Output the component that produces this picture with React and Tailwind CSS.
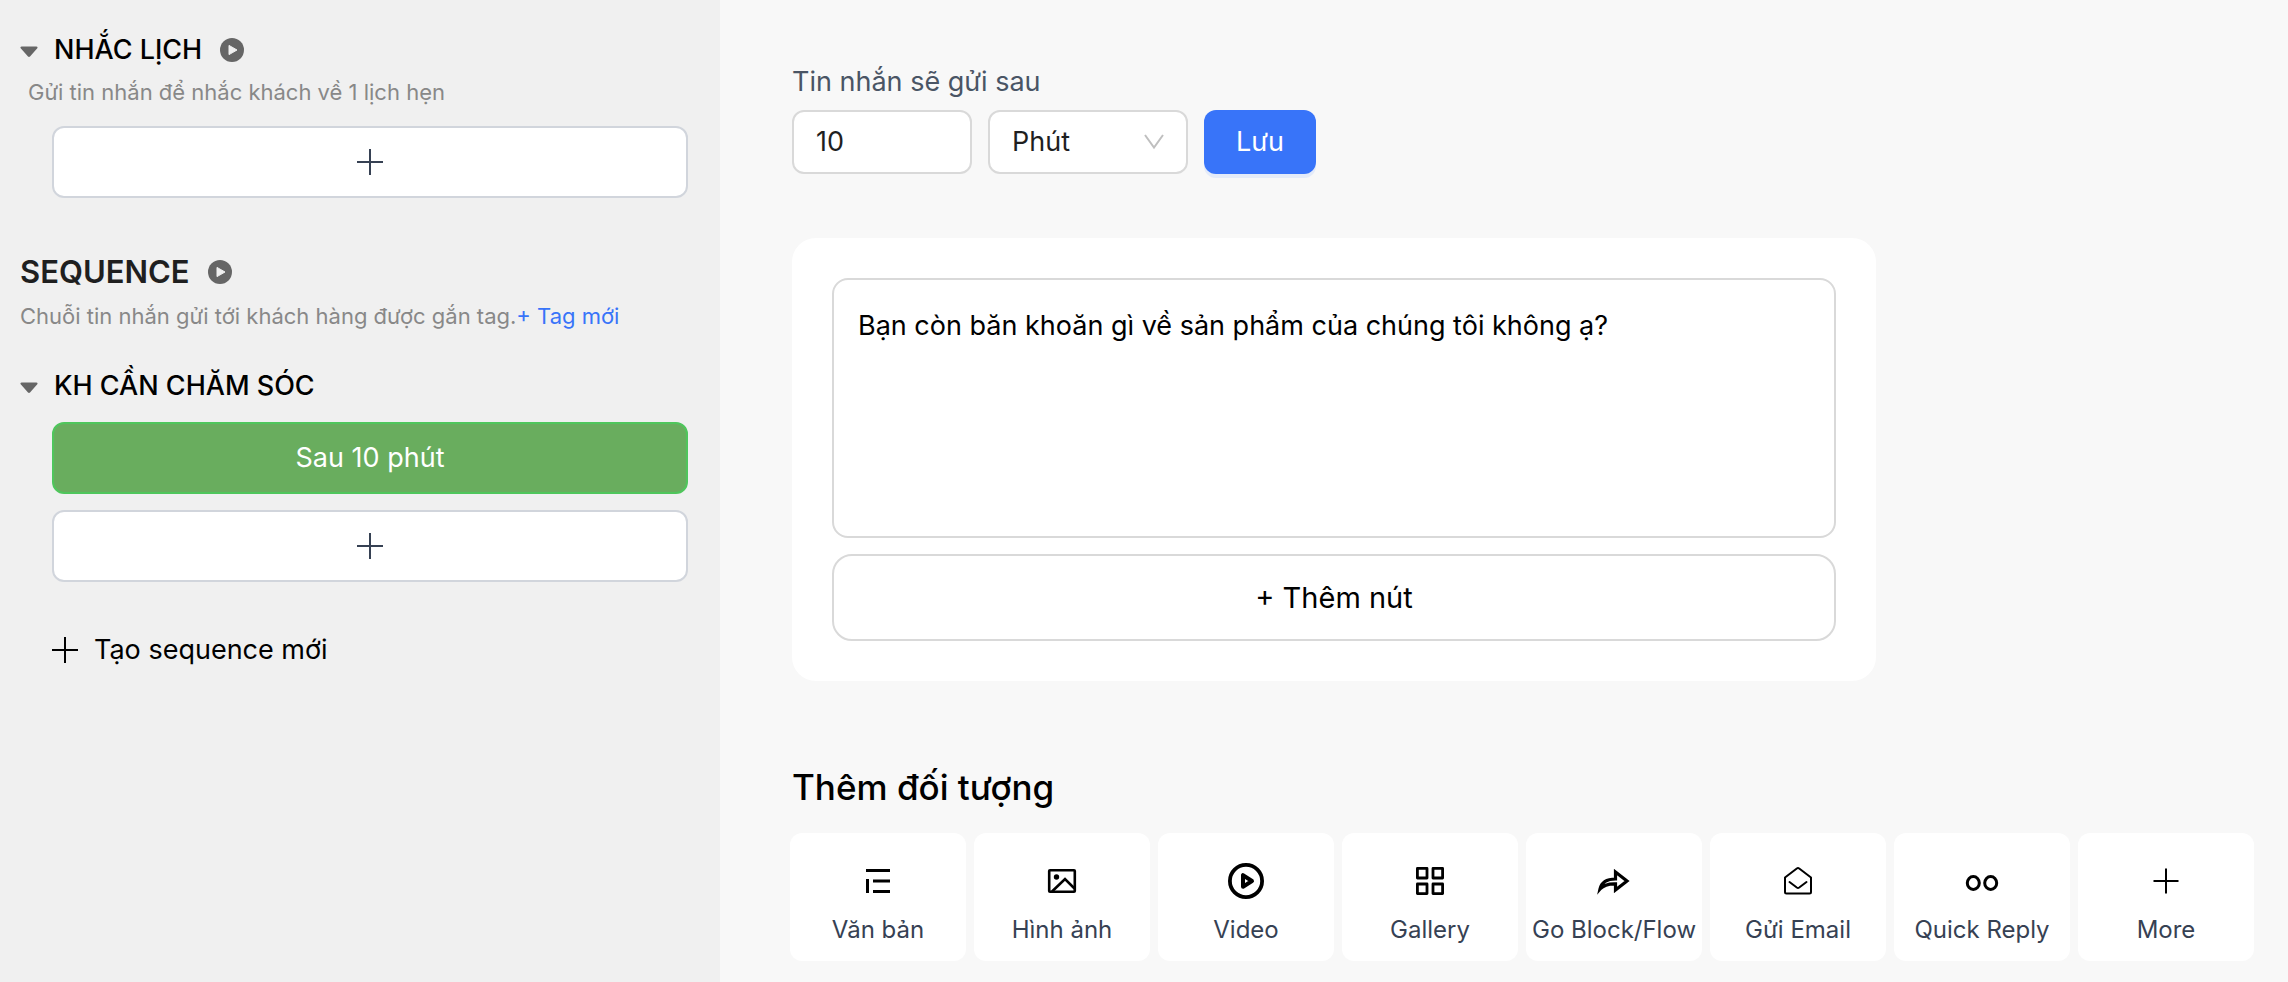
import { useState } from "react";

const Plus = () => (
  <svg viewBox="0 0 26 26" className="size-[26px]" stroke="currentColor" strokeWidth="2" fill="none">
    <path d="M13 0v26M0 13h26" />
  </svg>
);

const PlayBadge = () => (
  <svg viewBox="0 0 24 24" className="size-6 text-[#666]">
    <circle cx="12" cy="12" r="12" fill="currentColor" />
    <path d="M9 7.4v9.2l8-4.6z" fill="#f0f0f0" stroke="#f0f0f0" strokeWidth="1" strokeLinejoin="round" />
  </svg>
);

const Caret = () => (
  <svg viewBox="0 0 18 15" className="h-[15px] w-[18px] text-[#666]">
    <path d="M1.6 3.5h14.8c1 0 1.5 1 .9 1.8L10 13.5c-.5.6-1.5.6-2 0L.7 5.3C.1 4.5.6 3.5 1.6 3.5z" fill="currentColor" />
  </svg>
);

const icons = {
  text: <path d="M6 7.5h24M7.5 16v14M13 18h17M13 28.5h17" strokeWidth="3" />,
  image: (
    <>
      <rect x="5.2" y="7.2" width="25.6" height="21.6" rx=".8" strokeWidth="2.6" />
      <circle cx="12.5" cy="14" r="2.7" fill="currentColor" stroke="none" />
      <path d="M8 28.5L21 16l9.5 9.5" strokeWidth="2.6" />
    </>
  ),
  video: (
    <>
      <circle cx="18" cy="18" r="16.1" strokeWidth="3.8" />
      <path d="M15 12.2v11.6l9-5.8z" strokeWidth="4" strokeLinejoin="round" />
    </>
  ),
  gallery: (
    <path
      d="M5.4 5.4H15V15H5.4zM21 5.4h9.6V15H21zM5.4 21H15v9.6H5.4zM21 21h9.6v9.6H21z"
      strokeWidth="2.8"
      strokeLinejoin="round"
    />
  ),
  go: <path d="M19.5 9v7C11 16 5.5 19 4 26c3.5-4 9-5.4 15.5-5.2V27L31 18z" strokeWidth="3.2" />,
  email: (
    <path
      d="M5 14.5l11.8-9c.7-.5 1.7-.5 2.4 0l11.8 9V29c0 1-.8 1.5-1.5 1.5h-23C5.7 30.5 5 30 5 29zM9.5 19l7.3 5.5c.7.5 1.7.5 2.4 0l7.3-5.5"
      strokeWidth="2"
      strokeLinejoin="round"
      strokeLinecap="round"
    />
  ),
  reply: (
    <>
      <ellipse cx="9.3" cy="20" rx="6" ry="6.5" strokeWidth="3" />
      <ellipse cx="26.7" cy="20" rx="6" ry="6.5" strokeWidth="3" />
    </>
  ),
  more: <path d="M18 5.5v25M5.5 18h25" strokeWidth="2" />,
};

const objects = [
  { icon: "text", label: "Văn bản" },
  { icon: "image", label: "Hình ảnh" },
  { icon: "video", label: "Video" },
  { icon: "gallery", label: "Gallery" },
  { icon: "go", label: "Go Block/Flow" },
  { icon: "email", label: "Gửi Email" },
  { icon: "reply", label: "Quick Reply" },
  { icon: "more", label: "More" },
];

function AddButton() {
  return (
    <button
      aria-label="Thêm tin nhắn"
      className="flex h-[72px] w-full items-center justify-center rounded-xl border-2 border-gray-300 bg-white text-gray-700"
    >
      <Plus />
    </button>
  );
}

function Sidebar() {
  return (
    <aside className="w-[720px] shrink-0 bg-[#f0f0f0] pt-7 pr-8 pl-5">
      <section>
        <div className="flex h-11 items-center">
          <Caret />
          <h2 className="ml-4 text-[27px] font-medium text-black">NHẮC LỊCH</h2>
          <button aria-label="Xem hướng dẫn nhắc lịch" className="ml-[18px]">
            <PlayBadge />
          </button>
        </div>
        <p className="mt-1 pl-2 text-[22px] leading-8 text-[#888]">Gửi tin nhắn để nhắc khách về 1 lịch hẹn</p>
        <div className="mt-[18px] pl-8">
          <AddButton />
        </div>
      </section>

      <section className="mt-[50px]">
        <div className="flex h-12 items-center">
          <h1 className="text-[31px] font-semibold text-[#1f1f1f]">SEQUENCE</h1>
          <button aria-label="Xem hướng dẫn sequence" className="ml-[18px]">
            <PlayBadge />
          </button>
        </div>
        <p className="mt-1 text-[22px] leading-8 text-[#888]">
          Chuỗi tin nhắn gửi tới khách hàng được gắn tag.
          <a href="#tag" className="text-[#3874f9]">
            + Tag mới
          </a>
        </p>
      </section>

      <section className="mt-8">
        <div className="flex h-11 items-center">
          <Caret />
          <h2 className="ml-4 text-[27px] font-medium text-black">KH CẦN CHĂM SÓC</h2>
        </div>
        <div className="mt-[14px] flex flex-col gap-4 pl-8">
          <button className="h-[72px] w-full rounded-xl border-2 border-[#4fc65c] bg-[#69ad5e] text-[27px] text-white">
            Sau 10 phút
          </button>
          <AddButton />
        </div>
        <button className="mt-[46px] ml-8 flex h-11 items-center gap-4 text-[27px] text-black">
          <Plus />
          Tạo sequence mới
        </button>
      </section>
    </aside>
  );
}

function DelayForm() {
  const [delay, setDelay] = useState("10");

  return (
    <form onSubmit={(e) => e.preventDefault()}>
      <label htmlFor="delay" className="block text-[27px] leading-11 text-gray-600">
        Tin nhắn sẽ gửi sau
      </label>
      <div className="mt-1.5 flex h-16 gap-4">
        <input
          id="delay"
          value={delay}
          onChange={(e) => setDelay(e.target.value)}
          className="w-[180px] rounded-xl border-2 border-[#d9d9d9] bg-white px-[22px] text-[27px] text-[#1f1f1f]"
        />
        <div className="relative w-[200px]">
          <select
            aria-label="Đơn vị thời gian"
            className="h-full w-full appearance-none rounded-xl border-2 border-[#d9d9d9] bg-white px-[22px] text-[27px] text-[#1f1f1f]"
          >
            <option>Phút</option>
            <option>Giờ</option>
            <option>Ngày</option>
          </select>
          <svg
            viewBox="0 0 20 16"
            className="pointer-events-none absolute top-6 right-6 h-4 w-5 text-[#bfbfbf]"
            fill="none"
            stroke="currentColor"
            strokeWidth="2"
          >
            <path d="M1 1l9 12.5L19 1" />
          </svg>
        </div>
        <button className="w-28 rounded-xl bg-[#3874f9] text-[27px] text-white shadow-[0_4px_0_#e4ebf9]">Lưu</button>
      </div>
    </form>
  );
}

function MessageCard() {
  const [message, setMessage] = useState("Bạn còn băn khoăn gì về sản phẩm của chúng tôi không ạ?");

  return (
    <div className="mt-16 flex max-w-[1084px] flex-col gap-4 rounded-3xl bg-white p-10">
      <textarea
        aria-label="Nội dung tin nhắn"
        value={message}
        onChange={(e) => setMessage(e.target.value)}
        className="block h-[260px] w-full resize-none rounded-2xl border-2 border-[#d9d9d9] p-6 text-[27px] leading-11 text-black"
      />
      <button className="h-[87px] w-full rounded-[20px] border-2 border-[#d9d9d9] text-[29px] text-black">
        + Thêm nút
      </button>
    </div>
  );
}

export default function App() {
  return (
    <div className="flex min-h-screen bg-[#f8f8f8] font-[Inter,'Liberation_Sans',sans-serif]">
      <Sidebar />
      <main className="min-w-0 flex-1 pt-[60px] pr-[34px] pb-5 pl-[70px]">
        <div className="px-0.5">
          <DelayForm />
          <MessageCard />
          <h2 className="mt-20 text-[35px] leading-[52px] font-medium text-black">Thêm đối tượng</h2>
        </div>
        <div className="mt-5 grid grid-cols-8 gap-2">
          {objects.map(({ icon, label }) => (
            <button
              key={label}
              className="flex h-32 flex-col items-center rounded-xl bg-white pt-[30px] text-2xl whitespace-nowrap text-gray-700"
            >
              <svg viewBox="0 0 36 36" className="size-9 text-black" fill="none" stroke="currentColor">
                {icons[icon]}
              </svg>
              <span className="mt-[15px]">{label}</span>
            </button>
          ))}
        </div>
      </main>
    </div>
  );
}
